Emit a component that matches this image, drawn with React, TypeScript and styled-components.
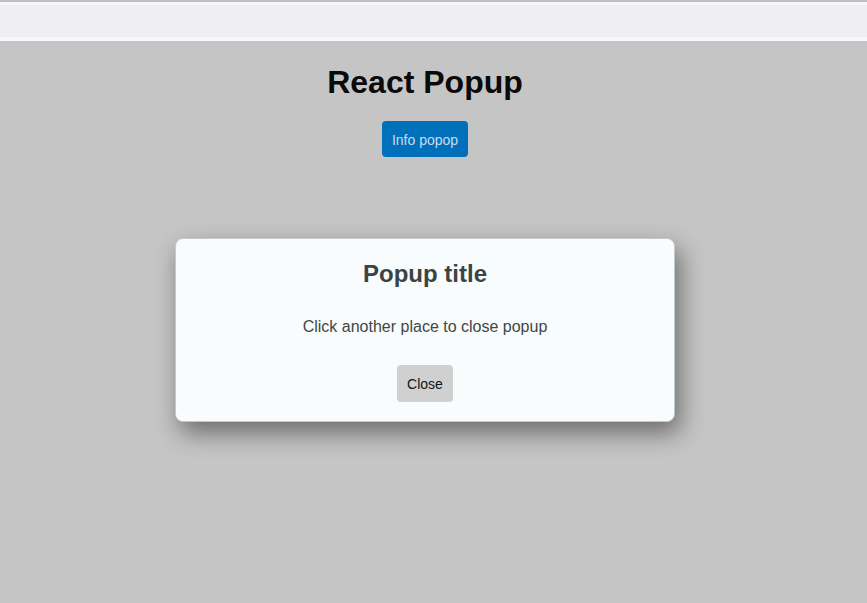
import React from "react";
import styled, { createGlobalStyle } from "styled-components";

const Global = createGlobalStyle`
  html, body { margin: 0; padding: 0; background: #c5c5c5; }
  body { font-family: "Liberation Sans", Arial, sans-serif; }
`;

const Shell = styled.div`
  width: 867px;
  height: 603px;
  display: flex;
  flex-direction: column;
  background: #c5c5c5;
  position: relative;
  overflow: hidden;
`;

const TopStrip = styled.div`
  height: 42px;
  flex: none;
  background: linear-gradient(
    to bottom,
    #c0bfc6 0px,
    #c0bfc6 2px,
    #f7f7fa 2px,
    #f7f7fa 5px,
    #efeef3 5px,
    #efeef3 37px,
    #f8f8fb 37px,
    #f8f8fb 41px,
    #c3c3c6 41px,
    #c3c3c6 42px
  );
`;

const Page = styled.main`
  width: 850px;
  display: flex;
  flex-direction: column;
  align-items: center;
`;

const Heading = styled.h1`
  margin: 22px 0 20px;
  font-size: 32px;
  font-weight: 700;
  line-height: 37px;
  color: #0a0a0a;
`;

const InfoButton = styled.button`
  height: 36px;
  padding: 1px 10px 0;
  border: none;
  border-radius: 4px;
  background: #0070bb;
  color: #c9dcee;
  font-family: "Liberation Sans", Arial, sans-serif;
  font-size: 14px;
  cursor: pointer;
`;

const Popup = styled.div`
  position: absolute;
  top: 238px;
  left: 175px;
  width: 500px;
  box-sizing: border-box;
  padding: 21px 20px 19px;
  background: #f8fcfd;
  border: 1px solid #c2cad1;
  border-radius: 8px;
  box-shadow: 5px 11px 24px rgba(0, 0, 0, 0.45);
  display: flex;
  flex-direction: column;
  align-items: center;
`;

const PopupTitle = styled.h2`
  margin: 0;
  font-size: 24px;
  font-weight: 700;
  line-height: 28px;
  color: #3c4343;
`;

const PopupText = styled.p`
  margin: 30px 0 0;
  font-size: 16px;
  line-height: 18px;
  color: #404747;
`;

const CloseButton = styled.button`
  margin-top: 29px;
  height: 37px;
  padding: 0 10px;
  border: none;
  border-radius: 4px;
  background: #d0d0d0;
  color: #111111;
  font-family: "Liberation Sans", Arial, sans-serif;
  font-size: 14px;
  cursor: pointer;
`;

export default function App() {
  return (
    <>
      <Global />
      <Shell>
        <TopStrip />
        <Page>
          <Heading>React Popup</Heading>
          <InfoButton>Info popop</InfoButton>
        </Page>
        <Popup>
          <PopupTitle>Popup title</PopupTitle>
          <PopupText>Click another place to close popup</PopupText>
          <CloseButton>Close</CloseButton>
        </Popup>
      </Shell>
    </>
  );
}
